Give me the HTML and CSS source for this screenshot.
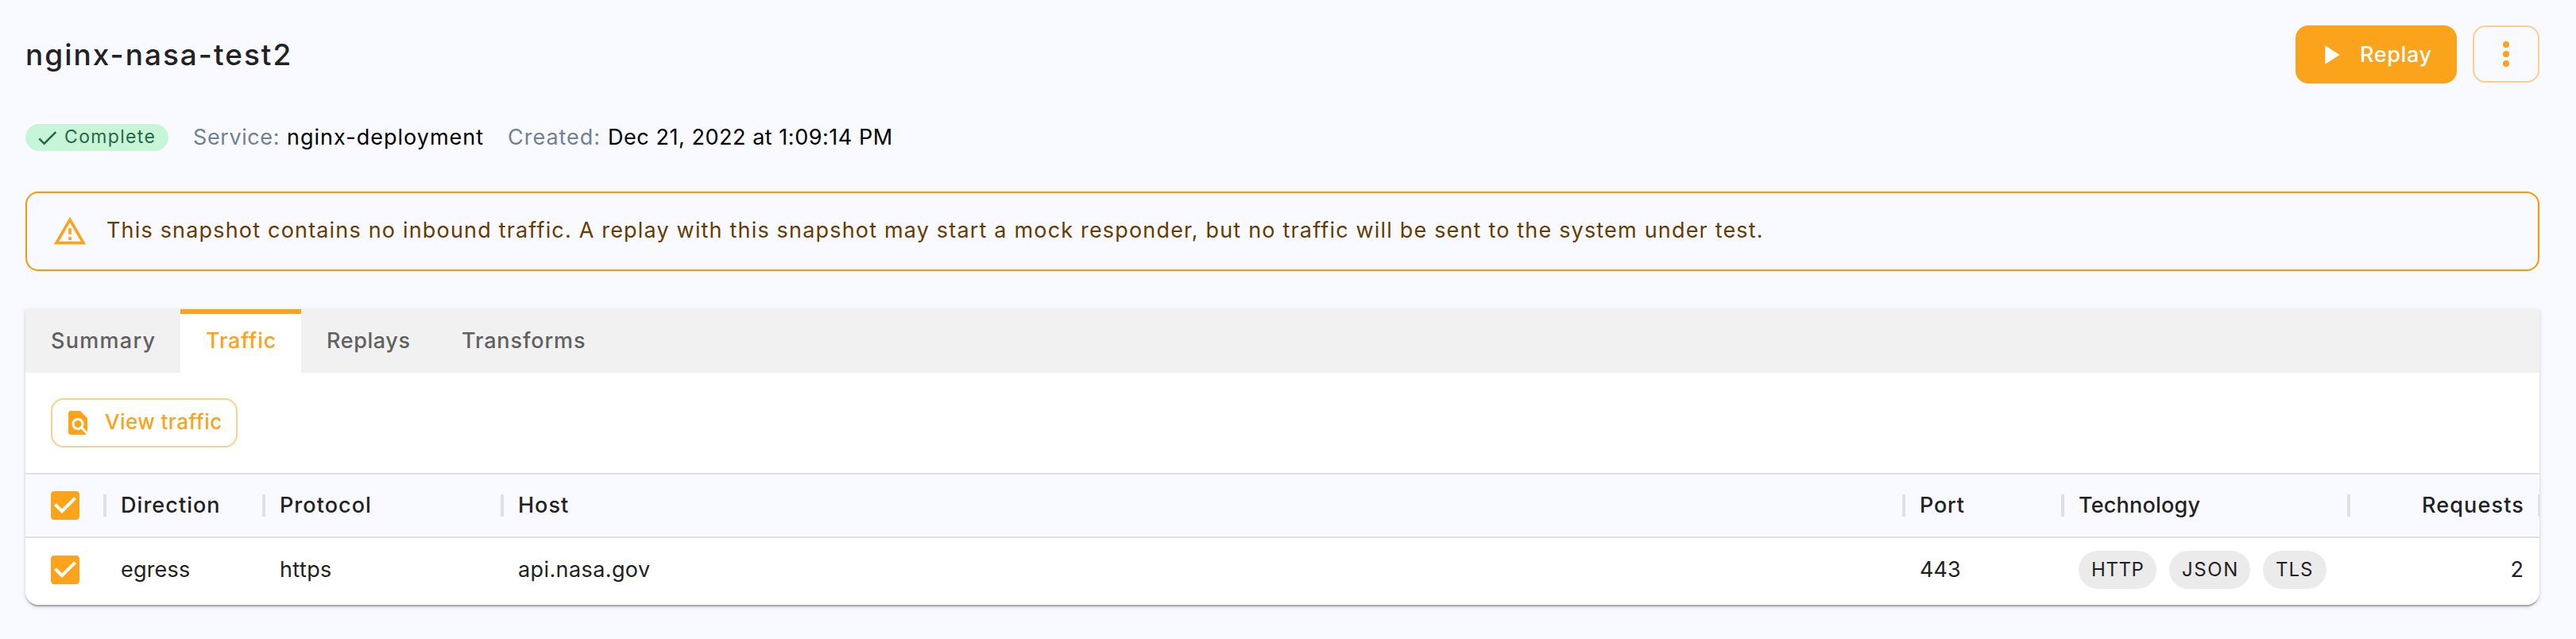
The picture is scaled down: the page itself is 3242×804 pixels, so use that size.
FILE: index.html
```html
<!DOCTYPE html>
<html lang="en">
<head>
<meta charset="utf-8">
<title>nginx-nasa-test2</title>
<link rel="stylesheet" href="styles.css">
</head>
<body>
<svg width="0" height="0" class="defs" aria-hidden="true">
  <symbol id="checkbox" viewBox="0 0 24 24"><path fill="#fff" d="M4 5h16v13H4z"/><path d="M19 3H5c-1.11 0-2 .9-2 2v14c0 1.1.89 2 2 2h14c1.11 0 2-.9 2-2V5c0-1.1-.89-2-2-2zm-9 14l-5-5 1.41-1.41L10 14.17l7.59-7.59L19 8l-9 9z"/></symbol>
</svg>
<main class="page">
  <header class="top">
    <h1 class="title">nginx-nasa-test2</h1>
    <div class="actions">
      <button class="btn-replay"><svg class="i40" viewBox="0 0 24 24"><path d="M8 5v14l11-7z"/></svg><span class="t-replay">Replay</span></button>
      <button class="btn-more" aria-label="More"><svg class="i48" viewBox="0 0 24 24"><circle cx="12" cy="6" r="2"/><circle cx="12" cy="12" r="2"/><circle cx="12" cy="18" r="2"/></svg></button>
    </div>
  </header>
  <div class="meta">
    <span class="badge"><svg class="i31" viewBox="0 0 24 24"><path d="M9 16.17 4.83 12l-1.42 1.41L9 19 21 7l-1.41-1.41z"/></svg><span class="badge-text">Complete</span></span>
    <span class="label label-service">Service:</span><span class="value value-service">nginx-deployment</span>
    <span class="label label-created">Created:</span><span class="value value-created">Dec 21, 2022 at 1:09:14 PM</span>
  </div>
  <div class="alert">
    <svg class="i44" viewBox="0 0 24 24"><path d="M12 5.99 19.53 19H4.47L12 5.99M12 2 1 21h22L12 2zm1 14h-2v2h2v-2zm0-6h-2v4h2v-4z"/></svg>
    <span class="alert-text">This snapshot contains no inbound traffic. A replay with this snapshot may start a mock responder, but no traffic will be sent to the system under test.</span>
  </div>
  <section class="card">
    <nav class="tabs">
      <a class="tab tab-summary">Summary</a>
      <a class="tab tab-traffic active">Traffic</a>
      <a class="tab tab-replays">Replays</a>
      <a class="tab tab-transforms">Transforms</a>
    </nav>
    <div class="toolbar">
      <button class="btn-view"><svg class="i36" viewBox="0 0 24 24"><path d="M20 19.59V8l-6-6H6c-1.1 0-1.99.9-1.99 2L4 20c0 1.1.89 2 1.99 2H18c.45 0 .85-.15 1.19-.4l-4.43-4.43c-.8.52-1.74.83-2.76.83-2.76 0-5-2.24-5-5s2.24-5 5-5 5 2.24 5 5c0 1.02-.31 1.96-.83 2.75L20 19.59zM9 13c0 1.66 1.34 3 3 3s3-1.34 3-3-1.34-3-3-3-3 1.34-3 3z"/></svg><span class="t-view">View traffic</span></button>
    </div>
    <div class="row head">
      <div class="cell check"><svg class="i48"><use href="#checkbox"/></svg></div>
      <div class="cell h-direction">Direction</div>
      <div class="cell h-protocol">Protocol</div>
      <div class="cell h-host">Host</div>
      <div class="cell h-port">Port</div>
      <div class="cell h-technology">Technology</div>
      <div class="cell h-requests num">Requests</div>
    </div>
    <div class="row body">
      <div class="cell check"><svg class="i48"><use href="#checkbox"/></svg></div>
      <div class="cell c-direction">egress</div>
      <div class="cell c-protocol">https</div>
      <div class="cell c-host">api.nasa.gov</div>
      <div class="cell c-port">443</div>
      <div class="cell chips"><span class="chip chip-http">HTTP</span><span class="chip chip-json">JSON</span><span class="chip chip-tls">TLS</span></div>
      <div class="cell num">2</div>
    </div>
  </section>
</main>
</body>
</html>
```
FILE: styles.css
```css
* { box-sizing: border-box; }
body {
  margin: 0;
  background: #f9faff;
  color: #222;
  font: 400 27px/36px Inter, "Liberation Sans", sans-serif;
  font-kerning: normal;
}
svg { display: block; flex: none; fill: #faa31b; }
.defs { position: absolute; }
.i31 { width: 31px; height: 31px; }
.i36 { width: 36px; height: 36px; }
.i40 { width: 40px; height: 40px; }
.i44 { width: 44px; height: 44px; }
.i48 { width: 48px; height: 48px; }
button { font: inherit; margin: 0; padding: 0; background: none; border: 0; display: flex; align-items: center; }

.page { padding: 32px 46px 43px 32px; height: 804px; }
.top { display: flex; justify-content: space-between; align-items: flex-start; height: 73px; }
.title { margin: 0; font-size: 37px; line-height: 73px; font-weight: 500; letter-spacing: 2px; }
.actions { display: flex; gap: 20px; }
.btn-replay { width: 203px; height: 73px; border-radius: 16px; background: #faa31b; color: #fff; font-weight: 500; padding-left: 24px; gap: 17px; }
.btn-replay svg { fill: #fff; }
.t-replay { letter-spacing: .62px; }
.btn-more { width: 84px; height: 72px; border: 2px solid #fccf8a; border-radius: 16px; justify-content: center; }

.meta { display: flex; align-items: center; height: 36px; margin-top: 50px; white-space: nowrap; }
.badge { display: flex; align-items: center; gap: 6px; width: 180px; height: 34px; padding-left: 12px; border-radius: 17px; background: #c6f6d5; color: #276749; }
.badge svg { fill: #276749; }
.badge-text { font-size: 23px; line-height: 32px; letter-spacing: 1.34px; margin-top: -2px; }
.label { color: #718096; margin-right: 9px; }
.value { color: #000; }
.label-service { margin-left: 31px; letter-spacing: .59px; }
.value-service { letter-spacing: 1.01px; }
.label-created { margin-left: 30px; letter-spacing: .96px; }
.value-created { letter-spacing: .54px; }

.alert { display: flex; align-items: center; gap: 24px; height: 100px; margin-top: 50px; padding-left: 32px; border: 2px solid #ff9800; border-radius: 16px; color: #663c00; }
.alert-text { letter-spacing: 1.18px; white-space: nowrap; margin-top: -2px; }

.card {
  margin-top: 48px;
  background: #fff;
  border-radius: 0 0 16px 16px;
  box-shadow: 0 4px 2px -2px rgba(0,0,0,.2), 0 2px 2px rgba(0,0,0,.14), 0 2px 6px rgba(0,0,0,.12);
}
.tabs { display: flex; height: 80px; background: #f1f1f1; }
.tab { padding: 0 0 0 32px; line-height: 80px; font-weight: 500; color: #616161; white-space: nowrap; }
.tab.active { background: #fff; color: #faa31b; box-shadow: inset 0 6px #faa31b; }
.tab-summary { width: 195px; letter-spacing: 1.28px; }
.tab-traffic { width: 152px; letter-spacing: .8px; }
.tab-replays { width: 170px; letter-spacing: .58px; }
.tab-transforms { letter-spacing: .87px; }

.toolbar { padding: 32px; height: 126px; }
.btn-view { width: 235px; height: 62px; border: 2px solid #fccf8a; border-radius: 16px; padding-left: 14px; gap: 16px; color: #faa31b; font-size: 26px; font-weight: 500; white-space: nowrap; }
.t-view { letter-spacing: .45px; margin-top: -2px; }

.row { display: grid; grid-template-columns: 100px 200px 300px 1fr 200px 360px 240px; align-items: center; }
.cell { position: relative; padding: 0 20px; }
.cell.check { padding: 0 0 0 26px; }
.num { text-align: right; }
.head { height: 82px; border-top: 2px solid #e0e0e0; border-bottom: 2px solid #e0e0e0; background: #f9faff; overflow: hidden; font-weight: 500; }
.head .cell::after { content: ""; position: absolute; right: -2px; top: 50%; width: 4px; height: 28px; margin-top: -14px; background: #e0e0e0; }
.body { height: 84px; padding-bottom: 4px; }
.h-direction { letter-spacing: 1.05px; }
.h-protocol { letter-spacing: 1.05px; }
.h-host { letter-spacing: 1px; }
.h-port { letter-spacing: .8px; }
.h-technology { letter-spacing: .22px; }
.h-requests { letter-spacing: 1.16px; padding-right: 19px; }
.c-direction { letter-spacing: .2px; }
.c-protocol { letter-spacing: .4px; }
.c-host { letter-spacing: .4px; }
.c-port { letter-spacing: 0; }
.chips { display: flex; gap: 16px; }
.chip { height: 48px; line-height: 47px; border-radius: 24px; background: #ebebeb; font-size: 24px; padding-left: 16px; }
.chip-http { width: 98px; letter-spacing: .6px; }
.chip-json { width: 102px; letter-spacing: 1.6px; }
.chip-tls { width: 80px; letter-spacing: 1px; }
```
